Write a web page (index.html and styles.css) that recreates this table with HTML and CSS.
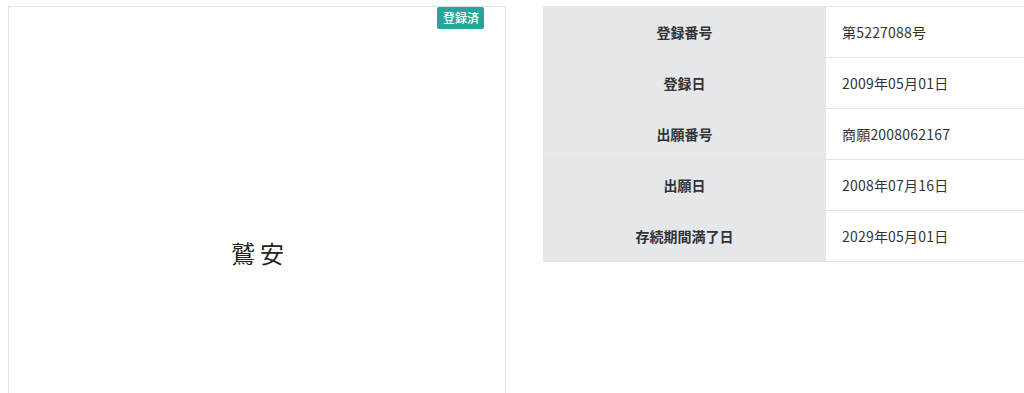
FILE: index.html
```html
<!DOCTYPE html>
<html lang="ja">
<head>
<meta charset="utf-8">
<link rel="stylesheet" href="styles.css">
</head>
<body>
<div class="page">
  <div class="mark-box">
    <span class="badge">登録済</span>
    <div class="mark-text">鷲安</div>
  </div>
  <table class="info">
    <tr><th>登録番号</th><td>第5227088号</td></tr>
    <tr><th>登録日</th><td>2009年05月01日</td></tr>
    <tr><th>出願番号</th><td>商願2008062167</td></tr>
    <tr><th>出願日</th><td>2008年07月16日</td></tr>
    <tr><th>存続期間満了日</th><td>2029年05月01日</td></tr>
  </table>
</div>
</body>
</html>
```
FILE: styles.css
```css
html, body {
  margin: 0;
  padding: 0;
  background: #fff;
  overflow: hidden;
}
body {
  font-family: "Noto Sans CJK JP", "Noto Sans", sans-serif;
  color: #333;
}
.page {
  display: flex;
  align-items: flex-start;
  gap: 37px;
  padding: 6px 0 0 8px;
  width: 1100px;
}
.mark-box {
  position: relative;
  flex: 0 0 auto;
  width: 496px;
  height: 496px;
  border: 1px solid #e2e2e2;
  display: flex;
  align-items: center;
  justify-content: center;
}
.badge {
  position: absolute;
  top: 0;
  right: 21px;
  background: #26a69a;
  color: #fff;
  font-size: 12px;
  font-weight: 500;
  line-height: 22px;
  padding: 0 5px 0 6px;
  border-radius: 2px;
}
.mark-text {
  font-family: "Noto Sans CJK JP", serif;
  font-weight: 400;
  font-size: 24px;
  letter-spacing: 5px;
  color: #222;
  margin: 0 0 6px 6px;
}
.info {
  border-collapse: collapse;
  width: 520px;
  font-size: 14px;
  border-top: 1px solid #e4e4e4;
}
.info th, .info td {
  height: 50px;
  padding: 0;
  border-bottom: 1px solid #e4e4e4;
  line-height: 20px;
}
.info th {
  width: 283px;
  background: #e5e7eb;
  font-weight: 700;
  text-align: center;
  color: #333;
}
.info td {
  padding-left: 16px;
  text-align: left;
  color: #333;
  letter-spacing: 0.2px;
}
```
